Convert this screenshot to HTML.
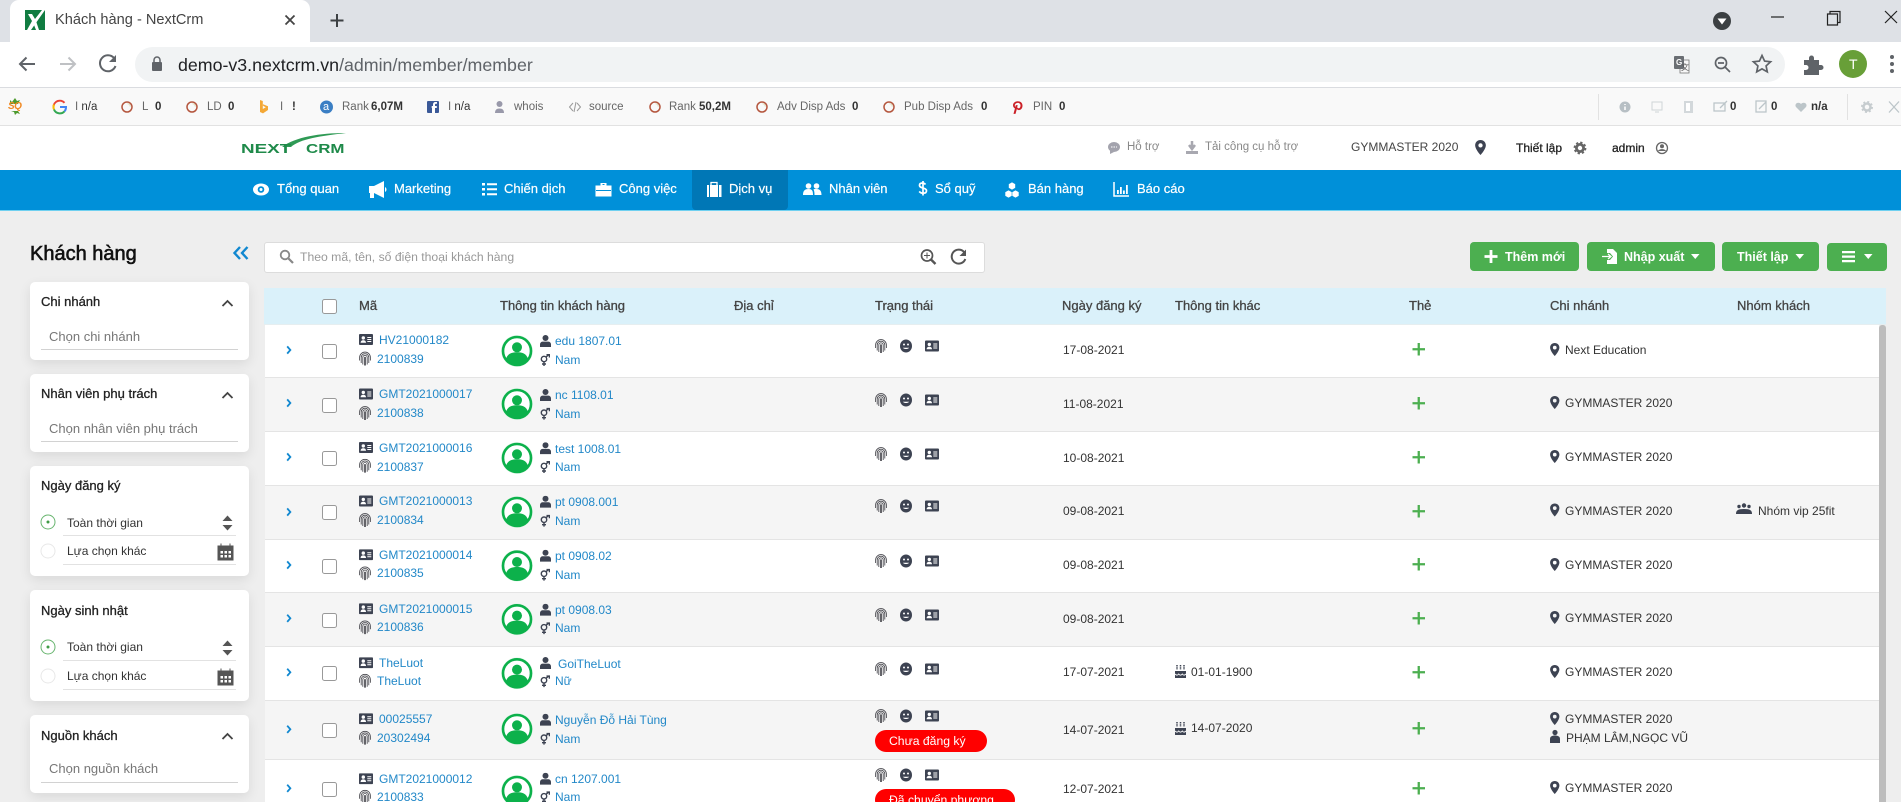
<!DOCTYPE html>
<html lang="vi"><head><meta charset="utf-8"><title>Khách hàng - NextCrm</title>
<style>
html,body{margin:0;padding:0;width:1901px;height:802px;overflow:hidden;background:#eee;font-family:"Liberation Sans","Noto Sans CJK SC",sans-serif}
#root{position:relative;width:1901px;height:802px;overflow:hidden}
.a{position:absolute}
.t{position:absolute;white-space:nowrap;line-height:16px;font-size:12px;color:#333}
.b{color:#2288c8}
.m{-webkit-text-stroke:.3px currentColor}
.e{font-size:11.5px;color:#666;top:99px}
.n{font-size:11.5px;color:#333;font-weight:bold;top:99px}
.w{color:#fff;font-size:13px;top:181px;-webkit-text-stroke:.2px #fff}
.h{font-size:13px;color:#444;top:298px;-webkit-text-stroke:.3px #444}
.g{color:#888;top:139px;font-size:11.5px}
.c{background:#fff;border-radius:5px;box-shadow:0 4px 12px rgba(0,0,0,.09)}
.l{position:absolute;height:1px;background:#d2d2d2}
.p{color:#777;font-size:13px}
.k{font-size:13px;color:#222;-webkit-text-stroke:.3px #222}
.btn{position:absolute;background:#4caf50;border-radius:4px}
.bt{color:#fff;font-weight:bold;font-size:12.5px;top:249px}
.rw{position:absolute;left:265px;width:1614px}
.bd{position:absolute;background:#f00;border-radius:11px;color:#fff;font-size:12.2px;line-height:22px;height:22px;padding-left:14px;box-sizing:border-box;left:875px}
</style></head><body><div id="root">
<div class="a" style="left:0;top:0;width:1901px;height:42px;background:#dee1e6"></div>
<div class="a" style="left:10px;top:0;width:300px;height:42px;background:#fff;border-radius:9px 9px 0 0"></div>
<div class="a" style="left:0;top:42px;width:1901px;height:45px;background:#fff"></div>
<div class="a" style="left:135px;top:47px;width:1650px;height:35px;background:#f1f3f4;border-radius:18px"></div>
<div class="a" style="left:0;top:87px;width:1901px;height:1px;background:#dadce0"></div>
<div class="a" style="left:0;top:88px;width:1901px;height:37px;background:#f9f9f9;border-bottom:1px solid #e2e2e2"></div>
<div class="a" style="left:1598px;top:94px;width:1px;height:26px;background:#e2e2e2"></div>
<div class="a" style="left:1847px;top:94px;width:1px;height:26px;background:#e2e2e2"></div>
<div class="a" style="left:0;top:126px;width:1901px;height:44px;background:#fff"></div>
<div class="a" style="left:0;top:170px;width:1901px;height:41px;background:#0090d9;border-bottom:1px solid #6fd0f0;box-sizing:border-box"></div>
<div class="a" style="left:692px;top:170px;width:96px;height:40px;background:#0077b6;border-radius:0 0 4px 4px"></div>

<div class="c a" style="left:30px;top:282px;width:219px;height:78px"></div>
<div class="c a" style="left:30px;top:374px;width:219px;height:78px"></div>
<div class="c a" style="left:30px;top:466px;width:219px;height:110px"></div>
<div class="c a" style="left:30px;top:590px;width:219px;height:111px"></div>
<div class="c a" style="left:30px;top:715px;width:219px;height:78px"></div>
<div class="l" style="left:41px;top:349px;width:197px"></div>
<div class="l" style="left:41px;top:441px;width:197px"></div>
<div class="l" style="left:63px;top:535px;width:173px;background:#e2e2e2"></div>
<div class="l" style="left:63px;top:564px;width:173px;background:#e2e2e2"></div>
<div class="l" style="left:63px;top:660px;width:173px;background:#e2e2e2"></div>
<div class="l" style="left:63px;top:689px;width:173px;background:#e2e2e2"></div>
<div class="l" style="left:41px;top:782px;width:197px"></div>

<div class="a" style="left:264px;top:242px;width:721px;height:31px;background:#fff;border:1px solid #dcdcdc;border-radius:3px;box-sizing:border-box"></div>
<div class="btn" style="left:1470px;top:242px;width:109px;height:29px"></div>
<div class="btn" style="left:1587px;top:242px;width:128px;height:29px"></div>
<div class="btn" style="left:1722px;top:242px;width:97px;height:29px"></div>
<div class="btn" style="left:1827px;top:243px;width:60px;height:28px"></div>

<div class="a" style="left:264px;top:288px;width:1622px;height:37px;background:#daf1fa;border-bottom:1px solid #e6eef0;box-sizing:border-box"></div>
<div class="rw" style="top:325px;height:52px;background:#fff"></div>
<div class="rw" style="top:377px;height:54px;background:#f5f5f5"></div>
<div class="rw" style="top:431px;height:54px;background:#fff"></div>
<div class="rw" style="top:485px;height:54px;background:#f5f5f5"></div>
<div class="rw" style="top:539px;height:53px;background:#fff"></div>
<div class="rw" style="top:592px;height:54px;background:#f5f5f5"></div>
<div class="rw" style="top:646px;height:54px;background:#fff"></div>
<div class="rw" style="top:700px;height:59px;background:#f5f5f5"></div>
<div class="rw" style="top:759px;height:43px;background:#fff"></div>
<div class="rw" style="top:377px;height:1px;background:#e4e4e4"></div>
<div class="rw" style="top:431px;height:1px;background:#e4e4e4"></div>
<div class="rw" style="top:485px;height:1px;background:#e4e4e4"></div>
<div class="rw" style="top:539px;height:1px;background:#e4e4e4"></div>
<div class="rw" style="top:592px;height:1px;background:#e4e4e4"></div>
<div class="rw" style="top:646px;height:1px;background:#e4e4e4"></div>
<div class="rw" style="top:700px;height:1px;background:#e4e4e4"></div>
<div class="rw" style="top:759px;height:1px;background:#e4e4e4"></div>
<div class="a" style="left:1879px;top:325px;width:7px;height:477px;background:#bdbdbd;border-radius:3px 3px 0 0"></div>

<svg class="a" style="left:0;top:0" width="1901" height="802" viewBox="0 0 1901 802">
<defs>
<symbol id="idc" viewBox="0 0 14 11"><rect width="14" height="11" rx="1" fill="#3d4352"/><circle cx="4.3" cy="3.9" r="1.7" fill="#fff"/><path d="M1.6 8.800c0-1.700 1.100-2.600 2.700-2.600s2.700.9 2.700 2.600z" fill="#fff"/><path d="M8.300 3.500h4M8.300 5.500h4M8.300 7.500h4" stroke="#fff" fill="none"/></symbol>
<symbol id="fp" viewBox="0 0 12 14"><g fill="none" stroke="#4a4a50" stroke-width=".85"><path d="M.6 9V6a5.400 5.400 0 0 1 10.800 0v3"/><path d="M2.200 11.500V6a3.800 3.800 0 0 1 7.600 0v5.500"/><path d="M3.800 13V6a2.200 2.200 0 0 1 4.400 0v7"/><path d="M5.500 14V6a.6.6 0 0 1 1 0v8"/></g></symbol>
<symbol id="usr" viewBox="0 0 11 12"><circle cx="5.5" cy="3" r="3" fill="#3d4352"/><path d="M0 12V9.500C0 7.600 1.400 6.600 3 6.600h5c1.600 0 3 1 3 2.900V12z" fill="#3d4352"/></symbol>
<symbol id="gen" viewBox="0 0 10 12"><g fill="none" stroke="#3d4352" stroke-width="1.400"><circle cx="4" cy="5" r="2.700"/><path d="M4 7.700V12M2 10h4M6 3l3-2.500M6.500.7H9.400V3.500"/></g></symbol>
<symbol id="ava" viewBox="0 0 32 32"><circle cx="16" cy="16" r="15.800" fill="#dff4e6"/><circle cx="16" cy="16" r="14" fill="#fff" stroke="#0cb14b" stroke-width="2.600"/><circle cx="16" cy="12.300" r="5" fill="#0cb14b"/><path d="M5 24c1.500-5.500 6-6.700 11-6.700s9.500 1.200 11 6.700c-2.600 3.500-6.500 5.500-11 5.500S7.600 27.500 5 24z" fill="#0cb14b"/></symbol>
<symbol id="smi" viewBox="0 0 12 13"><ellipse cx="6" cy="6.500" rx="6" ry="6.500" fill="#3d4352"/><circle cx="4" cy="5" r="1" fill="#fff"/><circle cx="8" cy="5" r="1" fill="#fff"/><path d="M2.800 8.200c1.800 1.800 4.600 1.800 6.400 0z" fill="#fff"/></symbol>
<symbol id="pin" viewBox="0 0 10 14"><path fill-rule="evenodd" d="M5 0C2.200 0 0 2.100 0 5c0 3 3.500 7.500 5 9 1.500-1.500 5-6 5-9 0-2.900-2.200-5-5-5zm0 3a2 2 0 1 1 0 4 2 2 0 0 1 0-4z" fill="#3d4352"/></symbol>
<symbol id="pls" viewBox="0 0 12 12"><path d="M6 0v12M0 6h12" stroke="#4caf50" stroke-width="2.200"/></symbol>
<symbol id="chv" viewBox="0 0 6 10"><path d="M1 1l3.500 4L1 9" fill="none" stroke="#1188d0" stroke-width="2"/></symbol>
<symbol id="rx" viewBox="0 0 12 12"><circle cx="6" cy="6" r="5" fill="none" stroke="#b5573f" stroke-width="1.500"/><path d="M6.500 2.600a3.200 3.200 0 0 1 2.800 3" fill="none" stroke="#ddb" stroke-width="1"/></symbol>
<symbol id="cake" viewBox="0 0 11 13"><path d="M0 6h11v7H0z" fill="#3d4352"/><path d="M0 9c1.500 1.500 2.500 1.500 3.700 0 1.200 1.500 2.400 1.500 3.600 0 1.200 1.500 2.200 1.500 3.700 0" fill="none" stroke="#fff"/><path d="M2 0v5M5.500 0v5M9 0v5" stroke="#3d4352" stroke-width="1.500" stroke-dasharray="1.500 .8"/></symbol>
</defs>
<!-- chrome -->
<rect x="25" y="10" width="20" height="20" fill="#107c41"/><path d="M45 10 L31 30h-4l5-9-4-7h4l3 5 7-9z" fill="#fff"/><path d="M36 21l3 9h-3l-2-5z" fill="#fff"/>
<path d="M285.500 15.500l9 9M294.500 15.500l-9 9" stroke="#444" stroke-width="1.800"/>
<path d="M337 14v13M330.500 20.500h13" stroke="#3c4043" stroke-width="2"/>
<path d="M35 64H20M26.500 57.500L20 64l6.500 6.500" fill="none" stroke="#5f6368" stroke-width="2"/>
<path d="M75 64H60M68.500 57.500L75 64l-6.500 6.500" fill="none" stroke="#bfc1c4" stroke-width="2"/>
<path d="M114 58a8 8 0 1 0 1.500 8" fill="none" stroke="#5f6368" stroke-width="2"/><path d="M116 55v7h-7z" fill="#5f6368"/>
<rect x="152" y="62" width="10" height="9" rx="1" fill="#5f6368"/><path d="M154 62v-2a3 3 0 0 1 6 0v2" fill="none" stroke="#5f6368" stroke-width="1.500"/>
<circle cx="1722" cy="21" r="9" fill="#3c4043"/><path d="M1717.500 18.500h9l-4.500 6z" fill="#fff"/>
<path d="M1771 17h13" stroke="#222" stroke-width="1.200"/>
<path d="M1827.500 14h10v11h-10zM1830 14v-2.500h10v11h-2.500" fill="none" stroke="#222" stroke-width="1.200"/>
<path d="M1885 11l12 12M1897 11l-12 12" stroke="#222" stroke-width="1.200"/>
<rect x="1680" y="60" width="9" height="13" fill="#f7f7f7" stroke="#777" stroke-width=".8"/><rect x="1674" y="56" width="10" height="13" rx="1" fill="#6a6e73"/>
<circle cx="1721" cy="63" r="5.500" fill="none" stroke="#5f6368" stroke-width="1.700"/><path d="M1725 67l5 5M1718 63h6" stroke="#5f6368" stroke-width="1.700"/>
<path d="M1762 55.500l2.600 5.600 6 .7-4.500 4.100 1.200 6-5.300-3-5.300 3 1.200-6-4.500-4.100 6-.7z" fill="none" stroke="#5f6368" stroke-width="1.700"/>
<path d="M1804 60h5v-2a2.500 2.500 0 0 1 5 0v2h5v5h2a2.500 2.500 0 0 1 0 5h-2v5h-15v-5h2a2.500 2.500 0 0 0 0-5h-2z" fill="#5f6368"/>
<circle cx="1853" cy="64" r="14" fill="#689f38"/>
<circle cx="1892" cy="57" r="2" fill="#5f6368"/><circle cx="1892" cy="64" r="2" fill="#5f6368"/><circle cx="1892" cy="71" r="2" fill="#5f6368"/>
<!-- ext bar -->
<path d="M10 100l2 2 3-4 2 3 3-1-2 4h-8zM11 111l3 1 1 3 2-2 3 1-2-3z" fill="#4e9a2e"/>
<path d="M53.500 107a6.300 6.300 0 0 1 11-4.200" fill="none" stroke="#ea4335" stroke-width="2"/><path d="M54 104.500a6.300 6.300 0 0 0 0 5" fill="none" stroke="#fbbc05" stroke-width="2"/><path d="M54 109.500a6.300 6.300 0 0 0 10.500 1.800" fill="none" stroke="#34a853" stroke-width="2"/><path d="M60 107h6c0 2-.5 3.300-1.500 4.300" fill="none" stroke="#4285f4" stroke-width="2"/>
<use href="#rx" x="121" y="101" width="12" height="12"/><use href="#rx" x="186" y="101" width="12" height="12"/><use href="#rx" x="649" y="101" width="12" height="12"/><use href="#rx" x="756" y="101" width="12" height="12"/><use href="#rx" x="883" y="101" width="12" height="12"/>
<path d="M260 100l2.800 1v8l3-1.800-2-1 -1-.8 .2-1.200 5 2v3.800l-5 3.400-3-1.400z" fill="#f4a836"/>
<circle cx="326.500" cy="107" r="6.500" fill="#3b7fc4"/>
<rect x="427" y="101" width="12" height="12" rx="1" fill="#3b5998"/><path d="M435 113v-5h1.800v-2H435v-1.200c0-.6.300-1 1-1h1V102h-1.600c-1.600 0-2.400 1-2.400 2.500V106h-1.300v2H432v5z" fill="#fff"/>
<circle cx="499.500" cy="104" r="3" fill="#99a"/><path d="M495 113c0-3 1.500-4.500 4.500-4.500s4.500 1.500 4.500 4.500z" fill="#99a"/>
<path d="M573 103l-3.500 4 3.500 4M577 103l3.500 4-3.500 4M576 102l-2 10" fill="none" stroke="#999"/>
<path d="M1015 108.500c-1.300-.7-2-1.800-2-3.200 0-2.300 2-4 4.700-4 2.800 0 4.800 1.700 4.800 4.300 0 2.700-1.700 4.500-3.600 4.500-1 0-1.700-.5-2-1.200l-1.400 5h-2l2.300-8.800h1.900l-.5 2c.2.700.8 1.200 1.500 1.200 1 0 1.800-1.200 1.800-2.800 0-1.600-1.200-2.600-2.800-2.600-1.800 0-2.900 1.100-2.900 2.500 0 .8.300 1.300.7 1.600z" fill="#cb2027"/>
<circle cx="1625" cy="107" r="5.500" fill="#b7bfc4"/><path d="M1625 106.500v3.500M1625 104v1" stroke="#fff" stroke-width="1.500"/>
<rect x="1652" y="102" width="10" height="8" fill="none" stroke="#cfd5d8"/><path d="M1655 112h4" stroke="#cfd5d8"/>
<rect x="1684" y="101" width="9" height="12" fill="#d3d8db"/><rect x="1686" y="103" width="4" height="8" fill="#fff"/>
<path d="M1714 103h11v8h-11zM1720 108l7-7" fill="none" stroke="#bcc5c9" stroke-width="1.300"/>
<path d="M1756 101h10v11h-10zM1766 102l-7 7" fill="none" stroke="#bcc5c9" stroke-width="1.300"/>
<path d="M1801 112l-5-5c-2-3 2-6 5-3 3-3 7 0 5 3z" fill="#bcc5c9"/>
<circle cx="1867" cy="107" r="3.500" fill="none" stroke="#c6cccf" stroke-width="2.500"/><circle cx="1867" cy="107" r="5.200" fill="none" stroke="#c6cccf" stroke-width="1.600" stroke-dasharray="2 2.100"/>
<path d="M1889 101.500l10 11M1899 101.500l-10 11" stroke="#bcc5c9" stroke-width="1.300"/>
<!-- logo -->
<path d="M282 147C295 137 320 133 346 133C320 136 300 139 291 147z" fill="#2f9a55"/>
<!-- header icons -->
<ellipse cx="1114" cy="147" rx="6" ry="5" fill="#a3a3ad"/><path d="M1110 150v4l4-2z" fill="#a3a3ad"/><path d="M1111 147h6" stroke="#fff" stroke-dasharray="1.500 1"/>
<path d="M1192 141v7M1189 145l3 4 3-4" fill="none" stroke="#a8a8b0" stroke-width="2.500"/><path d="M1186 151h12v3h-12z" fill="#a8a8b0"/>
<use href="#pin" x="1475" y="140" width="11" height="15"/>
<circle cx="1580" cy="148" r="3.600" fill="none" stroke="#666" stroke-width="2.800"/><circle cx="1580" cy="148" r="5.500" fill="none" stroke="#666" stroke-width="1.800" stroke-dasharray="2.300 2.020"/>
<circle cx="1662" cy="148" r="5.500" fill="none" stroke="#666" stroke-width="1.300"/><circle cx="1662" cy="146.300" r="2" fill="#666"/><path d="M1658 151c1-2.500 7-2.500 8 0z" fill="#666"/>
<!-- nav icons -->
<ellipse cx="261" cy="189.500" rx="8" ry="6" fill="#fff"/><circle cx="261" cy="189.500" r="3.300" fill="#0090d9"/><circle cx="261" cy="189.500" r="1.500" fill="#fff"/>
<path d="M369 186h5l10-5v17l-10-5v5h-4v-5h-1zM385 187c2 1 2 4 0 5z" fill="#fff"/>
<path d="M482 183h3v2.500h-3zM482 188h3v2.500h-3zM482 193h3v2.500h-3zM487 183.300h10v2h-10zM487 188.300h10v2h-10zM487 193.300h10v2h-10z" fill="#fff"/>
<path d="M596 186h15v10h-15zM601 186v-2.500h5V186" fill="#fff" stroke="#fff"/><path d="M596 190.500h15" stroke="#0090d9"/><path d="M602.500 184.500h2" stroke="#0090d9"/>
<path d="M707 185h2v12h-2zM710 185h8v12h-8zM719 185h2.500v12H719z" fill="#fff"/><path d="M711 185v-2.500h6V185" fill="none" stroke="#fff" stroke-width="1.300"/>
<circle cx="808.500" cy="186" r="2.800" fill="#fff"/><circle cx="816.500" cy="186" r="2.800" fill="#fff"/><path d="M803 195c0-4.500 2-6 5.500-6s4.500 1.500 4.500 6zM814.500 195c0-2.500-.2-4.200-1-5.800 1-.2 2-.2 3-.2 3 0 5 1.500 5 6z" fill="#fff"/>
<path d="M925.500 184.500c-.8-1-1.800-1.500-3-1.500-2 0-3 1-3 2.300 0 3.500 7 2 7 5.400 0 1.500-1.200 2.500-3.300 2.500-1.600 0-2.900-.5-4-1.800M923 181v14.500" fill="none" stroke="#fff" stroke-width="1.700"/>
<path d="M1012 182l3.500 2v4l-3.500 2-3.500-2v-4zM1008.500 190l3.500 2v4l-3.500 2-3.500-2v-4zM1015.500 190l3.500 2v4l-3.500 2-3.500-2v-4z" fill="#fff" stroke="#0090d9" stroke-width=".6"/>
<path d="M1114 182v14h15" fill="none" stroke="#fff" stroke-width="1.500"/><path d="M1117 190h1.800v4H1117zM1120 187h1.800v7H1120zM1123 190.500h1.800v3.500H1123zM1126 185h1.800v9H1126z" fill="#fff"/>
<!-- side -->
<path d="M240 247l-5.500 6 5.500 6M247.500 247l-5.500 6 5.500 6" fill="none" stroke="#1188d0" stroke-width="2.400"/>
<path d="M222.500 306l5-5 5 5" fill="none" stroke="#444" stroke-width="1.800"/><path d="M222.500 398l5-5 5 5" fill="none" stroke="#444" stroke-width="1.800"/><path d="M222.500 739l5-5 5 5" fill="none" stroke="#444" stroke-width="1.800"/>
<circle cx="48" cy="522" r="7" fill="#fff" stroke="#68b56f" stroke-width="1"/><circle cx="48" cy="522" r="1.500" fill="#3f9b47"/>
<circle cx="48" cy="551" r="7" fill="#fff" stroke="#e8e8e8" stroke-width="1"/>
<circle cx="48" cy="647" r="7" fill="#fff" stroke="#68b56f" stroke-width="1"/><circle cx="48" cy="647" r="1.500" fill="#3f9b47"/>
<circle cx="48" cy="676" r="7" fill="#fff" stroke="#e8e8e8" stroke-width="1"/>
<path d="M222.500 521l5-5.500 5 5.500zM222.500 525l5 5.500 5-5.500z" fill="#555"/><path d="M222.500 646l5-5.500 5 5.500zM222.500 650l5 5.500 5-5.500z" fill="#555"/>
<path d="M218 546h15v14h-15zM221 543.500v3M230 543.500v3" fill="#555" stroke="#555"/><path d="M220.500 551h2.500v2.500h-2.500zM224.500 551h2.500v2.500h-2.500zM228.500 551h2.500v2.500h-2.500zM220.500 555h2.500v2.500h-2.500zM224.500 555h2.500v2.500h-2.500zM228.500 555h2.500v2.500h-2.500z" fill="#fff"/>
<path d="M218 671h15v14h-15zM221 668.500v3M230 668.500v3" fill="#555" stroke="#555"/><path d="M220.500 676h2.500v2.500h-2.500zM224.500 676h2.500v2.500h-2.500zM228.500 676h2.500v2.500h-2.500zM220.500 680h2.500v2.500h-2.500zM224.500 680h2.500v2.500h-2.500zM228.500 680h2.500v2.500h-2.500z" fill="#fff"/>
<!-- search -->
<circle cx="285" cy="255" r="4.300" fill="none" stroke="#888" stroke-width="1.800"/><path d="M288.500 258.500l4.500 4.500" stroke="#888" stroke-width="2.200"/>
<circle cx="927" cy="255.500" r="5.500" fill="none" stroke="#555" stroke-width="1.700"/><path d="M931 259.500l4.500 4.500" stroke="#555" stroke-width="2.400"/><path d="M924 255.500h6M927 252.500v6" stroke="#555"/>
<path d="M964 252a7 7 0 1 0 1.300 7" fill="none" stroke="#555" stroke-width="2"/><path d="M966 249.500v6.500h-6.500z" fill="#555"/>
<!-- buttons -->
<path d="M1491 250v13M1484.500 256.500h13" stroke="#fff" stroke-width="2.800"/>
<path d="M1607 249h6l4 4v11h-10v-4h3l3-3.500-3-3.500h-3z" fill="#fff"/><path d="M1602 256.500h8M1608 254l3 2.500-3 2.500" fill="none" stroke="#fff" stroke-width="1.300"/>
<path d="M1691 254h8.500l-4.250 5z" fill="#fff"/><path d="M1795.500 254h8.500l-4.250 5z" fill="#fff"/><path d="M1864 254h8.500l-4.250 5z" fill="#fff"/>
<path d="M1842 251h13v2.300h-13zM1842 255.500h13v2.300h-13zM1842 260h13v2.300h-13z" fill="#fff"/>
<rect x="322.500" y="299.500" width="14" height="14" rx="2" fill="#fff" stroke="#999"/>
<!-- rows -->
<g id="rows">
<use href="#chv" x="286" y="345.500" width="6" height="9"/><rect x="322.500" y="344.500" width="14" height="14" rx="2" fill="#fff" stroke="#999"/><use href="#idc" x="359" y="334" width="14" height="11"/><use href="#fp" x="359" y="351.500" width="12" height="14"/><use href="#ava" x="501" y="335" width="32" height="32"/><use href="#usr" x="540" y="335" width="11" height="12"/><use href="#gen" x="540" y="354" width="10" height="12"/><use href="#fp" x="875" y="339" width="12" height="14"/><use href="#smi" x="900" y="339.500" width="12" height="13"/><use href="#idc" x="925" y="340.500" width="14" height="11"/><use href="#pls" x="1412.500" y="343" width="12.500" height="12.500"/><use href="#pin" x="1550" y="343" width="9.500" height="13"/>
<use href="#chv" x="286" y="398.500" width="6" height="9"/><rect x="322.500" y="398.500" width="14" height="14" rx="2" fill="#fff" stroke="#999"/><use href="#idc" x="359" y="388.500" width="14" height="11"/><use href="#fp" x="359" y="406" width="12" height="14"/><use href="#ava" x="501" y="388" width="32" height="32"/><use href="#usr" x="540" y="389" width="11" height="12"/><use href="#gen" x="540" y="407.700" width="10" height="12"/><use href="#fp" x="875" y="393" width="12" height="14"/><use href="#smi" x="900" y="393.500" width="12" height="13"/><use href="#idc" x="925" y="394.500" width="14" height="11"/><use href="#pls" x="1412.500" y="397" width="12.500" height="12.500"/><use href="#pin" x="1550" y="396" width="9.500" height="13"/>
<use href="#chv" x="286" y="452.500" width="6" height="9"/><rect x="322.500" y="451.500" width="14" height="14" rx="2" fill="#fff" stroke="#999"/><use href="#idc" x="359" y="442" width="14" height="11"/><use href="#fp" x="359" y="458.700" width="12" height="14"/><use href="#ava" x="501" y="442" width="32" height="32"/><use href="#usr" x="540" y="442.300" width="11" height="12"/><use href="#gen" x="540" y="461" width="10" height="12"/><use href="#fp" x="875" y="447" width="12" height="14"/><use href="#smi" x="900" y="447.500" width="12" height="13"/><use href="#idc" x="925" y="448.500" width="14" height="11"/><use href="#pls" x="1412.500" y="451" width="12.500" height="12.500"/><use href="#pin" x="1550" y="450" width="9.500" height="13"/>
<use href="#chv" x="286" y="507.500" width="6" height="9"/><rect x="322.500" y="505.500" width="14" height="14" rx="2" fill="#fff" stroke="#999"/><use href="#idc" x="359" y="495.500" width="14" height="11"/><use href="#fp" x="359" y="513" width="12" height="14"/><use href="#ava" x="501" y="496" width="32" height="32"/><use href="#usr" x="540" y="495.700" width="11" height="12"/><use href="#gen" x="540" y="514.700" width="10" height="12"/><use href="#fp" x="875" y="499" width="12" height="14"/><use href="#smi" x="900" y="499.500" width="12" height="13"/><use href="#idc" x="925" y="500.500" width="14" height="11"/><use href="#pls" x="1412.500" y="505" width="12.500" height="12.500"/><use href="#pin" x="1550" y="503.500" width="9.500" height="13"/>
<use href="#chv" x="286" y="560.500" width="6" height="9"/><rect x="322.500" y="559.500" width="14" height="14" rx="2" fill="#fff" stroke="#999"/><use href="#idc" x="359" y="549.200" width="14" height="11"/><use href="#fp" x="359" y="566.300" width="12" height="14"/><use href="#ava" x="501" y="549.700" width="32" height="32"/><use href="#usr" x="540" y="549.700" width="11" height="12"/><use href="#gen" x="540" y="568.700" width="10" height="12"/><use href="#fp" x="875" y="554" width="12" height="14"/><use href="#smi" x="900" y="554.500" width="12" height="13"/><use href="#idc" x="925" y="555.500" width="14" height="11"/><use href="#pls" x="1412.500" y="558" width="12.500" height="12.500"/><use href="#pin" x="1550" y="558" width="9.500" height="13"/>
<use href="#chv" x="286" y="613.800" width="6" height="9"/><rect x="322.500" y="613.500" width="14" height="14" rx="2" fill="#fff" stroke="#999"/><use href="#idc" x="359" y="603.200" width="14" height="11"/><use href="#fp" x="359" y="620.300" width="12" height="14"/><use href="#ava" x="501" y="603.300" width="32" height="32"/><use href="#usr" x="540" y="603.700" width="11" height="12"/><use href="#gen" x="540" y="622.300" width="10" height="12"/><use href="#fp" x="875" y="608" width="12" height="14"/><use href="#smi" x="900" y="608.500" width="12" height="13"/><use href="#idc" x="925" y="609.500" width="14" height="11"/><use href="#pls" x="1412.500" y="612" width="12.500" height="12.500"/><use href="#pin" x="1550" y="611" width="9.500" height="13"/>
<use href="#chv" x="286" y="667.800" width="6" height="9"/><rect x="322.500" y="666.500" width="14" height="14" rx="2" fill="#fff" stroke="#999"/><use href="#idc" x="359" y="657.200" width="14" height="11"/><use href="#fp" x="359" y="673.700" width="12" height="14"/><use href="#ava" x="501" y="657.300" width="32" height="32"/><use href="#usr" x="540" y="657" width="11" height="12"/><use href="#gen" x="540" y="675.300" width="10" height="12"/><use href="#fp" x="875" y="662" width="12" height="14"/><use href="#smi" x="900" y="662.500" width="12" height="13"/><use href="#idc" x="925" y="663.500" width="14" height="11"/><use href="#cake" x="1175" y="665" width="11" height="13"/><use href="#pls" x="1412.500" y="666" width="12.500" height="12.500"/><use href="#pin" x="1550" y="665" width="9.500" height="13"/>
<use href="#chv" x="286" y="724.800" width="6" height="9"/><rect x="322.500" y="723.500" width="14" height="14" rx="2" fill="#fff" stroke="#999"/><use href="#idc" x="359" y="713.200" width="14" height="11"/><use href="#fp" x="359" y="730.700" width="12" height="14"/><use href="#ava" x="501" y="713" width="32" height="32"/><use href="#usr" x="540" y="713.700" width="11" height="12"/><use href="#gen" x="540" y="732.700" width="10" height="12"/><use href="#fp" x="875" y="709" width="12" height="14"/><use href="#smi" x="900" y="709.500" width="12" height="13"/><use href="#idc" x="925" y="710.500" width="14" height="11"/><use href="#cake" x="1175" y="722" width="11" height="13"/><use href="#pls" x="1412.500" y="722" width="12.500" height="12.500"/><use href="#pin" x="1550" y="712" width="9.500" height="13"/><circle cx="1555" cy="732.500" r="2.600" fill="#3d4352"/><path d="M1550 743v-4c0-2.500 2-3.500 5-3.500s5 1 5 3.500v4z" fill="#3d4352"/>
<use href="#chv" x="286" y="783.800" width="6" height="9"/><rect x="322.500" y="782.500" width="14" height="14" rx="2" fill="#fff" stroke="#999"/><use href="#idc" x="359" y="773.200" width="14" height="11"/><use href="#fp" x="359" y="789.700" width="12" height="14"/><use href="#ava" x="501" y="775" width="32" height="32"/><use href="#usr" x="540" y="772.700" width="11" height="12"/><use href="#gen" x="540" y="791.300" width="10" height="12"/><use href="#fp" x="875" y="768" width="12" height="14"/><use href="#smi" x="900" y="768.500" width="12" height="13"/><use href="#idc" x="925" y="769.500" width="14" height="11"/><use href="#pls" x="1412.500" y="782" width="12.500" height="12.500"/><use href="#pin" x="1550" y="781" width="9.500" height="13"/>
<circle cx="1744" cy="505.500" r="2.200" fill="#3d4352"/><circle cx="1739" cy="506.500" r="1.700" fill="#3d4352"/><circle cx="1749" cy="506.500" r="1.700" fill="#3d4352"/><path d="M1736 514c0-3.500 1.500-5 8-5s8 1.500 8 5z" fill="#3d4352"/>
</g>
</svg>

<!-- chrome text -->
<span class="t" style="left:55px;top:12px;font-size:14.6px;color:#444">Khách hàng - NextCrm</span>
<span class="t" style="left:178px;top:57px;font-size:17.8px;color:#202124">demo-v3.nextcrm.vn<span style="color:#5f6368">/admin/member/member</span></span>
<span class="t" style="left:1849px;top:56px;font-size:14px;color:#fff">T</span>
<span class="t" style="left:1676px;top:55px;font-size:8px;font-weight:bold;color:#fff">G</span>
<span class="t" style="left:1681px;top:60px;font-size:8px;color:#555">文</span>
<span class="t" style="left:8px;top:99px;font-size:10px;font-weight:bold;font-style:italic;color:#f08a24;letter-spacing:-.5px">SQ</span>
<!-- ext -->
<span class="t e" style="left:75px">I <b style="font-weight:normal;color:#333">n/a</b></span>
<span class="t e" style="left:142px">L</span><span class="t n" style="left:155px">0</span>
<span class="t e" style="left:207px">LD</span><span class="t n" style="left:228px">0</span>
<span class="t e" style="left:280px">I</span><span class="t n" style="left:292px">!</span>
<span class="t" style="left:323px;top:99px;font-size:11px;color:#fff">a</span>
<span class="t e" style="left:342px">Rank</span><span class="t n" style="left:371px">6,07M</span>
<span class="t e" style="left:448px">I <b style="font-weight:normal;color:#333">n/a</b></span>
<span class="t e" style="left:514px">whois</span>
<span class="t e" style="left:589px">source</span>
<span class="t e" style="left:669px">Rank</span><span class="t n" style="left:699px">50,2M</span>
<span class="t e" style="left:777px">Adv Disp Ads</span><span class="t n" style="left:852px">0</span>
<span class="t e" style="left:904px">Pub Disp Ads</span><span class="t n" style="left:981px">0</span>
<span class="t e" style="left:1033px">PIN</span><span class="t n" style="left:1059px">0</span>
<span class="t n" style="left:1730px">0</span><span class="t n" style="left:1771px">0</span><span class="t n" style="left:1811px">n/a</span>
<!-- logo + header -->
<span class="t" style="left:241px;top:141px;font-size:13px;font-weight:bold;color:#1f8a4a;transform:scaleX(1.45);transform-origin:0 50%">NEXT</span>
<span class="t" style="left:306px;top:141px;font-size:13px;font-weight:bold;color:#1f8a4a;transform:scaleX(1.3);transform-origin:0 50%">CRM</span>
<span class="t g" style="left:1127px">Hỗ trợ</span>
<span class="t g" style="left:1205px">Tải công cụ hỗ trợ</span>
<span class="t" style="left:1351px;top:139px;color:#444">GYMMASTER 2020</span>
<span class="t m" style="left:1516px;top:140px;color:#222">Thiết lập</span>
<span class="t m" style="left:1612px;top:140px;color:#222">admin</span>
<!-- nav -->
<span class="t w" style="left:277px">Tổng quan</span>
<span class="t w" style="left:394px">Marketing</span>
<span class="t w" style="left:504px">Chiến dịch</span>
<span class="t w" style="left:619px">Công việc</span>
<span class="t w" style="left:729px">Dịch vụ</span>
<span class="t w" style="left:829px">Nhân viên</span>
<span class="t w" style="left:935px">Sổ quỹ</span>
<span class="t w" style="left:1028px">Bán hàng</span>
<span class="t w" style="left:1137px">Báo cáo</span>
<!-- side -->
<span class="t" style="left:30px;top:244px;font-size:20px;line-height:20px;color:#111;-webkit-text-stroke:.6px #111">Khách hàng</span>
<span class="t k" style="left:41px;top:294px">Chi nhánh</span>
<span class="t p" style="left:49px;top:329px">Chọn chi nhánh</span>
<span class="t k" style="left:41px;top:386px">Nhân viên phụ trách</span>
<span class="t p" style="left:49px;top:421px">Chọn nhân viên phụ trách</span>
<span class="t k" style="left:41px;top:478px">Ngày đăng ký</span>
<span class="t" style="left:67px;top:515px">Toàn thời gian</span>
<span class="t" style="left:67px;top:543px">Lựa chọn khác</span>
<span class="t k" style="left:41px;top:603px">Ngày sinh nhật</span>
<span class="t" style="left:67px;top:639px">Toàn thời gian</span>
<span class="t" style="left:67px;top:668px">Lựa chọn khác</span>
<span class="t k" style="left:41px;top:728px">Nguồn khách</span>
<span class="t p" style="left:49px;top:761px">Chọn nguồn khách</span>
<!-- search, buttons -->
<span class="t" style="left:300px;top:249px;font-size:12.2px;color:#999">Theo mã, tên, số điện thoại khách hàng</span>
<span class="t bt" style="left:1505px">Thêm mới</span>
<span class="t bt" style="left:1624px">Nhập xuất</span>
<span class="t bt" style="left:1737px">Thiết lập</span>
<!-- header -->
<span class="t h" style="left:359px">Mã</span>
<span class="t h" style="left:500px">Thông tin khách hàng</span>
<span class="t h" style="left:734px">Địa chỉ</span>
<span class="t h" style="left:875px">Trạng thái</span>
<span class="t h" style="left:1062px">Ngày đăng ký</span>
<span class="t h" style="left:1175px">Thông tin khác</span>
<span class="t h" style="left:1409px">Thẻ</span>
<span class="t h" style="left:1550px">Chi nhánh</span>
<span class="t h" style="left:1737px">Nhóm khách</span>
<!-- rows text -->
<span class="t b" style="left:379px;top:332px">HV21000182</span><span class="t b" style="left:377px;top:351px">2100839</span><span class="t b" style="left:555px;top:333px">edu 1807.01</span><span class="t b" style="left:555px;top:352px">Nam</span><span class="t" style="left:1063px;top:342px">17-08-2021</span><span class="t" style="left:1565px;top:342px">Next Education</span>
<span class="t b" style="left:379px;top:386px">GMT2021000017</span><span class="t b" style="left:377px;top:405px">2100838</span><span class="t b" style="left:555px;top:387px">nc 1108.01</span><span class="t b" style="left:555px;top:406px">Nam</span><span class="t" style="left:1063px;top:396px">11-08-2021</span><span class="t" style="left:1565px;top:395px">GYMMASTER 2020</span>
<span class="t b" style="left:379px;top:440px">GMT2021000016</span><span class="t b" style="left:377px;top:459px">2100837</span><span class="t b" style="left:555px;top:441px">test 1008.01</span><span class="t b" style="left:555px;top:459px">Nam</span><span class="t" style="left:1063px;top:450px">10-08-2021</span><span class="t" style="left:1565px;top:449px">GYMMASTER 2020</span>
<span class="t b" style="left:379px;top:493px">GMT2021000013</span><span class="t b" style="left:377px;top:512px">2100834</span><span class="t b" style="left:555px;top:494px">pt 0908.001</span><span class="t b" style="left:555px;top:513px">Nam</span><span class="t" style="left:1063px;top:503px">09-08-2021</span><span class="t" style="left:1565px;top:503px">GYMMASTER 2020</span><span class="t" style="left:1758px;top:503px">Nhóm vip 25fit</span>
<span class="t b" style="left:379px;top:547px">GMT2021000014</span><span class="t b" style="left:377px;top:565px">2100835</span><span class="t b" style="left:555px;top:548px">pt 0908.02</span><span class="t b" style="left:555px;top:567px">Nam</span><span class="t" style="left:1063px;top:557px">09-08-2021</span><span class="t" style="left:1565px;top:557px">GYMMASTER 2020</span>
<span class="t b" style="left:379px;top:601px">GMT2021000015</span><span class="t b" style="left:377px;top:619px">2100836</span><span class="t b" style="left:555px;top:602px">pt 0908.03</span><span class="t b" style="left:555px;top:620px">Nam</span><span class="t" style="left:1063px;top:611px">09-08-2021</span><span class="t" style="left:1565px;top:610px">GYMMASTER 2020</span>
<span class="t b" style="left:379px;top:655px">TheLuot</span><span class="t b" style="left:377px;top:673px">TheLuot</span><span class="t b" style="left:558px;top:656px">GoiTheLuot</span><span class="t b" style="left:555px;top:673px">Nữ</span><span class="t" style="left:1063px;top:664px">17-07-2021</span><span class="t" style="left:1191px;top:664px">01-01-1900</span><span class="t" style="left:1565px;top:664px">GYMMASTER 2020</span>
<span class="t b" style="left:379px;top:711px">00025557</span><span class="t b" style="left:377px;top:730px">20302494</span><span class="t b" style="left:555px;top:712px">Nguyễn Đỗ Hải Tùng</span><span class="t b" style="left:555px;top:731px">Nam</span><span class="t" style="left:1063px;top:722px">14-07-2021</span><span class="t" style="left:1191px;top:720px">14-07-2020</span><span class="t" style="left:1565px;top:711px">GYMMASTER 2020</span><span class="t" style="left:1566px;top:730px">PHẠM LÂM,NGỌC VŨ</span>
<span class="t b" style="left:379px;top:771px">GMT2021000012</span><span class="t b" style="left:377px;top:789px">2100833</span><span class="t b" style="left:555px;top:771px">cn 1207.001</span><span class="t b" style="left:555px;top:789px">Nam</span><span class="t" style="left:1063px;top:781px">12-07-2021</span><span class="t" style="left:1565px;top:780px">GYMMASTER 2020</span>
<div class="bd" style="top:730px;width:112px">Chưa đăng ký</div>
<div class="bd" style="top:789px;width:140px">Đã chuyển phương</div>
</div></body></html>
